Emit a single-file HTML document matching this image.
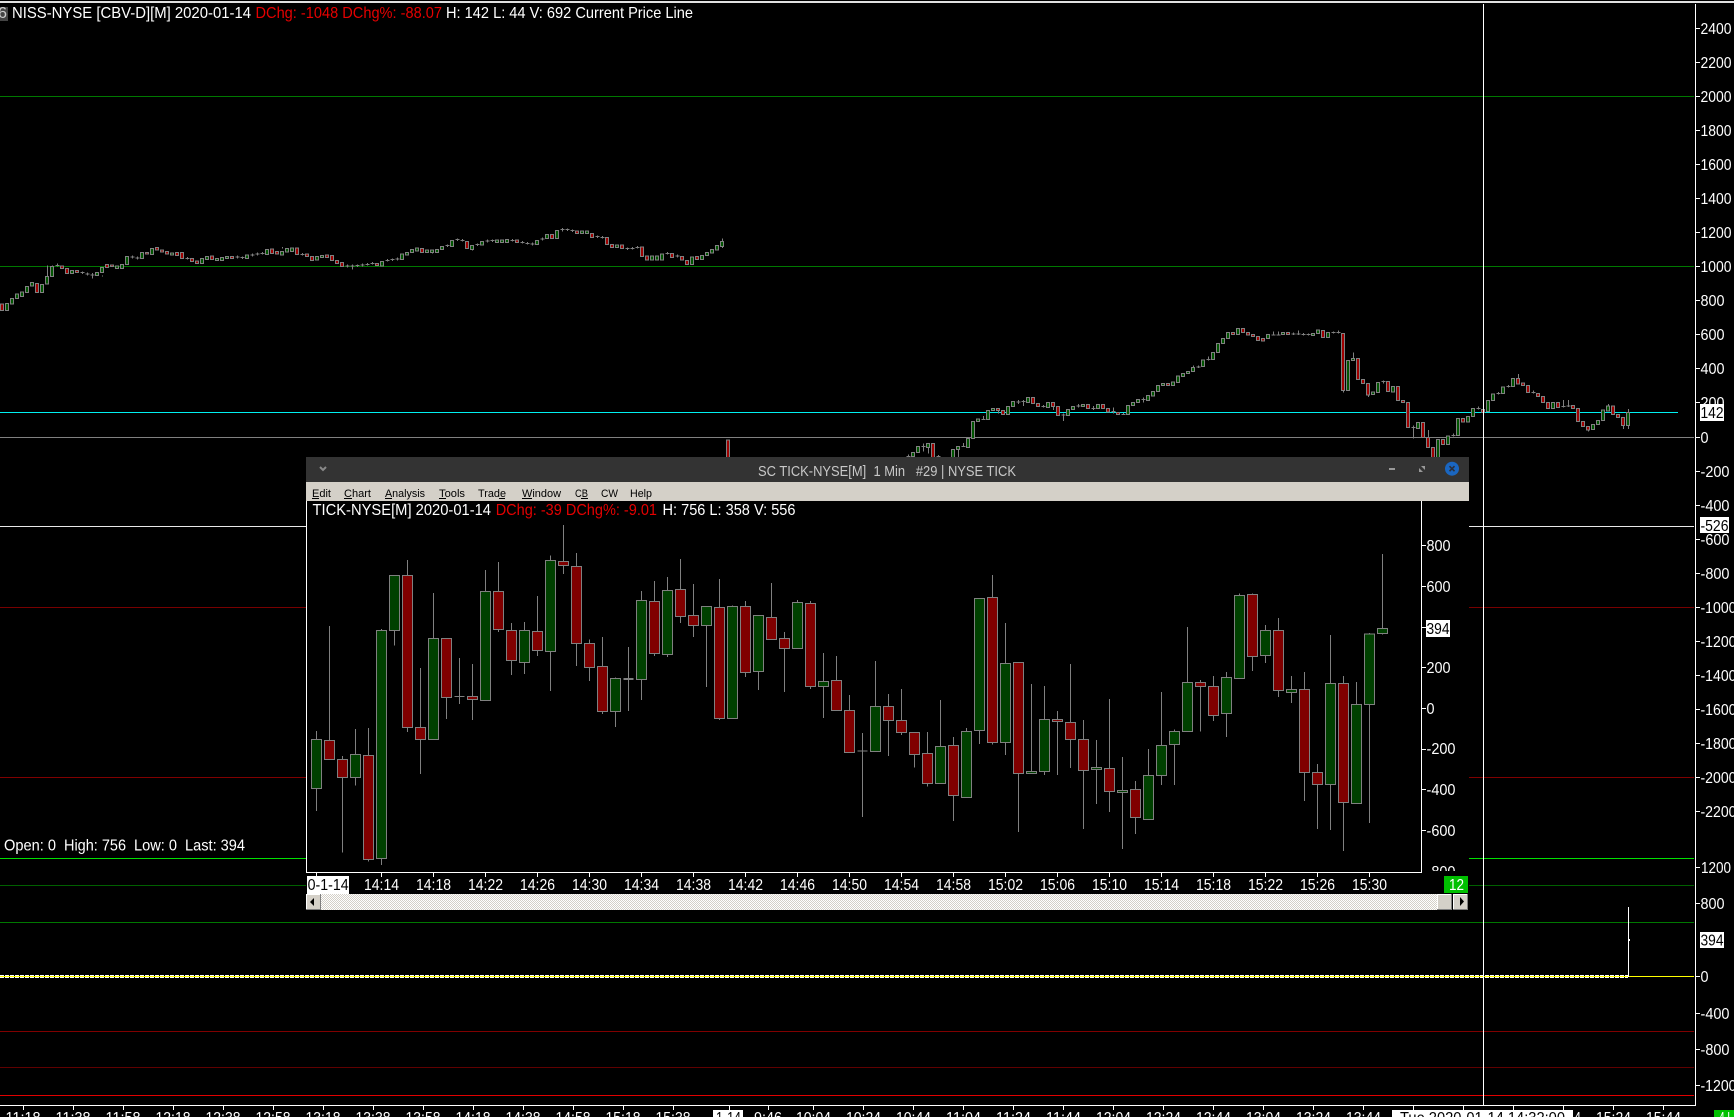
<!DOCTYPE html>
<html><head><meta charset="utf-8"><title>Chart</title>
<style>
html,body{margin:0;padding:0;background:#000;width:1734px;height:1117px;overflow:hidden}
svg{display:block}
text{font-family:"Liberation Sans",Arial,sans-serif;font-size:16px;fill:#fff}
.c path{vector-effect:non-scaling-stroke;stroke:#808080;stroke-width:1;shape-rendering:crispEdges}
.l{shape-rendering:crispEdges}
.m text{font-size:11px;fill:#000}
</style></head><body>
<svg width="1734" height="1117" viewBox="0 0 1734 1117" xmlns="http://www.w3.org/2000/svg">
<defs><pattern id="dth" width="2" height="2" patternUnits="userSpaceOnUse"><rect width="2" height="2" fill="#fff"/><rect width="1" height="1" fill="#d4d0c8"/><rect x="1" y="1" width="1" height="1" fill="#d4d0c8"/></pattern></defs>
<rect width="1734" height="1117" fill="#000"/>
<g class="l">
<rect x="0" y="1" width="1734" height="2" fill="#e0e0e0"/>
<rect x="0" y="96" width="1694" height="1" fill="#007800"/>
<rect x="0" y="266" width="1694" height="1" fill="#007800"/>
<rect x="0" y="437" width="1694" height="1" fill="#808080"/>
<rect x="0" y="412" width="1678" height="1" fill="#00f0f0"/>
<rect x="0" y="526" width="1694" height="1" fill="#e8e8e8"/>
<rect x="0" y="607" width="1694" height="1" fill="#780000"/>
<rect x="0" y="777" width="1694" height="1" fill="#800000"/>
<rect x="0" y="858" width="1694" height="1" fill="#00e000"/>
<rect x="0" y="885" width="1694" height="1" fill="#006000"/>
<rect x="0" y="922" width="1694" height="1" fill="#007800"/>
<rect x="0" y="1031" width="1694" height="1" fill="#800000"/>
<rect x="0" y="1067" width="1694" height="1" fill="#600000"/>
<rect x="0" y="1095" width="1694" height="1" fill="#e00000"/>
<rect x="0" y="1105" width="1696" height="1" fill="#fff"/>
<rect x="1695" y="4" width="1" height="1102" fill="#fff"/>
</g>
<!-- zero line in lower panel -->
<line x1="0" y1="976.5" x2="1628" y2="976.5" stroke="#fff" stroke-width="3" stroke-dasharray="4 1" class="l"/>
<rect x="0" y="976" width="1694" height="1" fill="#ff0" class="l"/>
<rect x="1628" y="907" width="1" height="70" fill="#fff" class="l"/>
<rect x="1629" y="939" width="1" height="2" fill="#fff" class="l"/>

<!-- main candles, segment 1 -->
<g class="c" transform="translate(2.5 0) scale(1 .33333)">
<path fill="#005500" d="M3 910h3V932h-3zM8 895h3V912h-3zM13 882h3V895h-3zM18 876h3V889h-3zM23 860h3V878h-3zM28 848h3V858h-3zM38 853h3V877h-3zM43 830h3V852h-3zM48 800h3V830h-3zM68 811h3V821h-3zM93 817h3V826h-3zM98 802h3V817h-3zM113 798h3V805h-3zM118 793h3V805h-3zM123 770h3V793h-3zM138 758h3V775h-3zM148 745h3V763h-3zM168 759h3V765h-3zM198 776h3V790h-3zM203 770h3V778h-3zM213 775h3V781h-3zM218 773h3V782h-3zM223 769h3V776h-3zM243 765h3V775h-3zM263 748h3V763h-3zM278 755h3V765h-3zM283 745h3V756h-3zM288 744h3V755h-3zM313 769h3V780h-3zM318 766h3V773h-3zM378 784h3V798h-3zM398 762h3V778h-3zM403 757h3V765h-3zM408 748h3V757h-3zM413 744h3V753h-3zM423 750h3V757h-3zM428 750h3V757h-3zM433 748h3V758h-3zM438 739h3V749h-3zM448 721h3V739h-3zM468 737h3V748h-3zM478 725h3V735h-3zM493 720h3V727h-3zM498 720h3V727h-3zM503 719h3V727h-3zM533 721h3V733h-3zM543 703h3V716h-3zM553 692h3V716h-3zM578 693h3V700h-3zM583 693h3V700h-3zM613 735h3V743h-3zM648 768h3V780h-3zM653 768h3V780h-3zM658 762h3V780h-3zM688 771h3V793h-3zM698 767h3V779h-3zM703 757h3V767h-3zM708 749h3V759h-3zM713 737h3V750h-3zM718 725h3V740h-3z"/>
<path fill="#a00000" d="M-2 912h3V932h-3zM33 850h3V878h-3zM58 798h3V805h-3zM63 805h3V821h-3zM73 811h3V818h-3zM103 794h3V802h-3zM108 795h3V800h-3zM143 757h3V762h-3zM153 743h3V750h-3zM158 750h3V756h-3zM163 755h3V762h-3zM173 757h3V766h-3zM178 758h3V775h-3zM188 775h3V785h-3zM193 783h3V790h-3zM208 768h3V778h-3zM228 769h3V775h-3zM268 747h3V760h-3zM273 755h3V762h-3zM293 744h3V763h-3zM303 762h3V769h-3zM308 769h3V781h-3zM323 765h3V772h-3zM328 767h3V782h-3zM333 782h3V790h-3zM338 788h3V800h-3zM373 790h3V797h-3zM418 745h3V758h-3zM463 724h3V745h-3zM513 720h3V727h-3zM548 703h3V716h-3zM573 693h3V700h-3zM588 700h3V712h-3zM603 713h3V733h-3zM608 733h3V743h-3zM618 735h3V745h-3zM638 741h3V770h-3zM643 768h3V780h-3zM668 760h3V772h-3zM678 770h3V780h-3zM683 781h3V793h-3zM693 770h3V779h-3z"/>
<path fill="none" d="M53 796h4M55 790v10M78 818h4M80 814v8M83 822h4M85 818v8M88 825h4M90 819v16M128 771h4M130 767v8M133 774h4M135 770v8M183 775h4M185 771v8M233 771h4M235 767v8M238 773h4M240 769v8M248 765h4M250 761v8M253 762h4M255 758v8M258 760h4M260 756v8M298 763h4M300 759v8M343 798h4M345 794v8M348 798h4M350 794v14M353 797h4M355 793v8M358 795h4M360 791v8M363 793h4M365 789v8M368 790h4M370 786v8M383 781h4M385 777v8M388 779h4M390 775v8M393 777h4M395 773v8M443 737h4M445 733v8M453 719h4M455 715v8M458 721h4M460 717v8M473 734h4M475 730v8M483 723h4M485 719v8M488 722h4M490 718v8M508 721h4M510 717v8M518 727h4M520 723v8M523 730h4M525 726v8M528 732h4M530 728v8M538 717h4M540 713v8M558 689h4M560 684v10M563 689h4M565 685v8M568 692h4M570 688v8M593 710h4M595 706v8M598 712h4M600 708v8M623 746h4M625 742v8M628 745h4M630 741v8M633 742h4M635 738v8M663 760h4M665 756v8M673 768h4M675 764v8M45 796v34M720 715v10M720 740v4M50 796v4M60 805v2M100 826v4M280 745v-4M430 757v3M470 748v4"/>
</g>

<!-- main candles, segment 2 -->
<g class="c" transform="translate(.5 320) scale(1 .33333)">
<path fill="#005500" d="M911 398h3V410h-3zM916 379h3V398h-3zM926 370h3V383h-3zM951 388h3V420h-3zM956 379h3V389h-3zM966 355h3V383h-3zM971 304h3V355h-3zM976 297h3V305h-3zM986 272h3V299h-3zM991 265h3V272h-3zM1006 260h3V283h-3zM1011 245h3V260h-3zM1026 232h3V248h-3zM1046 248h3V263h-3zM1066 268h3V287h-3zM1071 260h3V269h-3zM1081 253h3V260h-3zM1096 254h3V265h-3zM1126 257h3V283h-3zM1131 248h3V257h-3zM1136 238h3V248h-3zM1146 226h3V242h-3zM1151 214h3V228h-3zM1156 196h3V215h-3zM1161 190h3V197h-3zM1171 186h3V197h-3zM1176 168h3V188h-3zM1181 160h3V170h-3zM1186 154h3V161h-3zM1191 142h3V155h-3zM1201 120h3V140h-3zM1211 97h3V119h-3zM1216 70h3V97h-3zM1221 55h3V71h-3zM1226 37h3V56h-3zM1236 25h3V44h-3zM1266 43h3V55h-3zM1281 37h3V44h-3zM1311 40h3V47h-3zM1316 30h3V40h-3zM1326 37h3V52h-3zM1346 121h3V212h-3zM1351 115h3V121h-3zM1371 216h3V224h-3zM1376 187h3V218h-3zM1391 199h3V216h-3zM1416 307h3V325h-3zM1436 358h3V420h-3zM1446 348h3V374h-3zM1456 295h3V347h-3zM1466 289h3V306h-3zM1471 265h3V289h-3zM1486 241h3V275h-3zM1491 222h3V242h-3zM1501 201h3V221h-3zM1511 175h3V200h-3zM1551 247h3V265h-3zM1591 314h3V329h-3zM1596 301h3V314h-3zM1601 270h3V301h-3zM1606 258h3V273h-3zM1626 277h3V317h-3z"/>
<path fill="#a00000" d="M726 360h3V420h-3zM931 370h3V420h-3zM996 265h3V272h-3zM1001 272h3V283h-3zM1031 232h3V250h-3zM1036 250h3V260h-3zM1051 248h3V260h-3zM1056 260h3V287h-3zM1086 254h3V265h-3zM1101 254h3V265h-3zM1106 265h3V276h-3zM1116 278h3V284h-3zM1166 190h3V197h-3zM1231 37h3V44h-3zM1241 25h3V38h-3zM1246 37h3V45h-3zM1251 43h3V50h-3zM1256 50h3V62h-3zM1261 55h3V63h-3zM1286 37h3V44h-3zM1321 31h3V52h-3zM1341 40h3V212h-3zM1356 115h3V178h-3zM1361 178h3V191h-3zM1366 190h3V225h-3zM1386 184h3V215h-3zM1396 199h3V242h-3zM1401 241h3V248h-3zM1406 248h3V322h-3zM1421 308h3V352h-3zM1426 352h3V382h-3zM1431 382h3V420h-3zM1441 358h3V373h-3zM1461 295h3V306h-3zM1481 269h3V277h-3zM1516 175h3V192h-3zM1521 189h3V197h-3zM1526 196h3V218h-3zM1536 220h3V230h-3zM1541 230h3V248h-3zM1546 247h3V265h-3zM1556 247h3V263h-3zM1571 256h3V265h-3zM1576 265h3V305h-3zM1581 304h3V320h-3zM1586 319h3V330h-3zM1611 258h3V283h-3zM1616 283h3V292h-3zM1621 292h3V317h-3z"/>
<path fill="none" d="M906 410h4M908 404v8M921 380h4M923 370v25M936 410h4M938 405v15M961 379h4M963 369v10M981 298h4M983 288v10M1016 246h4M1018 240v12M1021 245h4M1023 240v18M1041 260h4M1043 255v7M1061 285h4M1063 280v23M1076 258h4M1078 252v10M1091 265h4M1093 258v12M1111 275h4M1113 262v18M1121 283h4M1123 279v6M1141 238h4M1143 232v16M1196 141h4M1198 137v7M1206 119h4M1208 110v11M1271 45h4M1273 35v12M1276 45h4M1278 35v12M1291 42h4M1293 38v7M1296 42h4M1298 32v13M1301 43h4M1303 39v7M1306 44h4M1308 40v7M1331 38h4M1333 34v7M1336 38h4M1338 32v8M1381 185h4M1383 182v8M1411 322h4M1413 317v39M1451 346h4M1453 340v9M1476 265h4M1478 260v8M1496 221h4M1498 216v8M1506 200h4M1508 195v8M1531 217h4M1533 212v8M1561 260h4M1563 240v22M1566 258h4M1568 240v21M928 383v17M958 389v22M998 272v8M1053 260v10M1428 330v22M1518 162v13M1628 267v10M1628 317v10M1623 317v10M1353 97v18M1343 212v6M1368 225v6M1608 252v6M1193 137v5M1588 330v5"/>
</g>

<!-- crosshair -->
<rect x="1483" y="4" width="1" height="1101" fill="#fff" class="l"/>

<!-- main axis ticks -->
<path class="l" stroke="#fff" stroke-width="1" fill="none" d="M1696 28.5h4M1696 62.5h4M1696 96.5h4M1696 130.5h4M1696 164.5h4M1696 198.5h4M1696 232.5h4M1696 266.5h4M1696 300.5h4M1696 334.5h4M1696 368.5h4M1696 402.5h4M1696 437.5h4M1696 471.5h4M1696 505.5h4M1696 539.5h4M1696 573.5h4M1696 607.5h4M1696 641.5h4M1696 675.5h4M1696 709.5h4M1696 743.5h4M1696 777.5h4M1696 811.5h4M1696 867.5h4M1696 903.5h4M1696 976.5h4M1696 1013.5h4M1696 1049.5h4M1696 1085.5h4M23.5 1105v5M73.5 1105v5M123.5 1105v5M173.5 1105v5M223.5 1105v5M273.5 1105v5M323.5 1105v5M373.5 1105v5M423.5 1105v5M473.5 1105v5M523.5 1105v5M573.5 1105v5M623.5 1105v5M673.5 1105v5M729.5 1105v5M768.5 1105v5M813.5 1105v5M863.5 1105v5M913.5 1105v5M963.5 1105v5M1013.5 1105v5M1063.5 1105v5M1113.5 1105v5M1163.5 1105v5M1213.5 1105v5M1263.5 1105v5M1313.5 1105v5M1363.5 1105v5M1413.5 1105v5M1463.5 1105v5M1513.5 1105v5M1563.5 1105v5M1613.5 1105v5M1663.5 1105v5"/>

<!-- main axis labels -->
<g>
<text x="1700.5" y="34" textLength="31" lengthAdjust="spacingAndGlyphs">2400</text>
<text x="1700.5" y="68" textLength="31" lengthAdjust="spacingAndGlyphs">2200</text>
<text x="1700.5" y="102" textLength="31" lengthAdjust="spacingAndGlyphs">2000</text>
<text x="1700.5" y="136" textLength="31" lengthAdjust="spacingAndGlyphs">1800</text>
<text x="1700.5" y="170" textLength="31" lengthAdjust="spacingAndGlyphs">1600</text>
<text x="1700.5" y="204" textLength="31" lengthAdjust="spacingAndGlyphs">1400</text>
<text x="1700.5" y="238" textLength="31" lengthAdjust="spacingAndGlyphs">1200</text>
<text x="1700.5" y="272" textLength="31" lengthAdjust="spacingAndGlyphs">1000</text>
<text x="1700.5" y="306" textLength="24" lengthAdjust="spacingAndGlyphs">800</text>
<text x="1700.5" y="340" textLength="24" lengthAdjust="spacingAndGlyphs">600</text>
<text x="1700.5" y="374" textLength="24" lengthAdjust="spacingAndGlyphs">400</text>
<text x="1700.5" y="408" textLength="24" lengthAdjust="spacingAndGlyphs">200</text>
<text x="1700.5" y="443" textLength="8" lengthAdjust="spacingAndGlyphs">0</text>
<text x="1700.5" y="477" textLength="29" lengthAdjust="spacingAndGlyphs">-200</text>
<text x="1700.5" y="511" textLength="29" lengthAdjust="spacingAndGlyphs">-400</text>
<text x="1700.5" y="545" textLength="29" lengthAdjust="spacingAndGlyphs">-600</text>
<text x="1700.5" y="579" textLength="29" lengthAdjust="spacingAndGlyphs">-800</text>
<text x="1700.5" y="613" textLength="36" lengthAdjust="spacingAndGlyphs">-1000</text>
<text x="1700.5" y="647" textLength="36" lengthAdjust="spacingAndGlyphs">-1200</text>
<text x="1700.5" y="681" textLength="36" lengthAdjust="spacingAndGlyphs">-1400</text>
<text x="1700.5" y="715" textLength="36" lengthAdjust="spacingAndGlyphs">-1600</text>
<text x="1700.5" y="749" textLength="36" lengthAdjust="spacingAndGlyphs">-1800</text>
<text x="1700.5" y="783" textLength="36" lengthAdjust="spacingAndGlyphs">-2000</text>
<text x="1700.5" y="817" textLength="36" lengthAdjust="spacingAndGlyphs">-2200</text>
<text x="1701" y="873" textLength="30" lengthAdjust="spacingAndGlyphs">1200</text>
<text x="1700.5" y="909" textLength="24" lengthAdjust="spacingAndGlyphs">800</text>
<text x="1700.5" y="982" textLength="8" lengthAdjust="spacingAndGlyphs">0</text>
<text x="1700.5" y="1019" textLength="29" lengthAdjust="spacingAndGlyphs">-400</text>
<text x="1700.5" y="1055" textLength="29" lengthAdjust="spacingAndGlyphs">-800</text>
<text x="1700.5" y="1091" textLength="36" lengthAdjust="spacingAndGlyphs">-1200</text>
<rect x="1700" y="404" width="24" height="17" fill="#fff"/>
<text x="1700.5" y="418" textLength="23" lengthAdjust="spacingAndGlyphs" style="fill:#000">142</text>
<rect x="1700" y="517" width="29" height="16" fill="#fff"/>
<text x="1700.5" y="531" textLength="28" lengthAdjust="spacingAndGlyphs" style="fill:#000">-526</text>
<rect x="1700" y="932" width="24" height="16" fill="#fff"/>
<text x="1700.5" y="945.5" textLength="23" lengthAdjust="spacingAndGlyphs" style="fill:#000">394</text>
</g>

<!-- titles -->
<rect x="0" y="7" width="8" height="14" fill="#444"/>
<text x="-2" y="18" textLength="9" lengthAdjust="spacingAndGlyphs" style="fill:#ccc">6</text>
<text x="12" y="18" textLength="239" lengthAdjust="spacingAndGlyphs">NISS-NYSE [CBV-D][M] 2020-01-14</text>
<text x="255.5" y="18" textLength="186.5" lengthAdjust="spacingAndGlyphs" style="fill:#e60000">DChg: -1048 DChg%: -88.07</text>
<text x="446" y="18" textLength="247" lengthAdjust="spacingAndGlyphs">H: 142 L: 44 V: 692 Current Price Line</text>
<text x="4" y="850.5" textLength="52" lengthAdjust="spacingAndGlyphs">Open: 0</text>
<text x="64" y="850.5" textLength="62" lengthAdjust="spacingAndGlyphs">High: 756</text>
<text x="134" y="850.5" textLength="43" lengthAdjust="spacingAndGlyphs">Low: 0</text>
<text x="185" y="850.5" textLength="60" lengthAdjust="spacingAndGlyphs">Last: 394</text>

<!-- main bottom axis labels -->
<g>
<text x="5.5" y="1123" textLength="35" lengthAdjust="spacingAndGlyphs">11:18</text>
<text x="55.5" y="1123" textLength="35" lengthAdjust="spacingAndGlyphs">11:38</text>
<text x="105.5" y="1123" textLength="35" lengthAdjust="spacingAndGlyphs">11:58</text>
<text x="155.5" y="1123" textLength="35" lengthAdjust="spacingAndGlyphs">12:18</text>
<text x="205.5" y="1123" textLength="35" lengthAdjust="spacingAndGlyphs">12:38</text>
<text x="255.5" y="1123" textLength="35" lengthAdjust="spacingAndGlyphs">12:58</text>
<text x="305.5" y="1123" textLength="35" lengthAdjust="spacingAndGlyphs">13:18</text>
<text x="355.5" y="1123" textLength="35" lengthAdjust="spacingAndGlyphs">13:38</text>
<text x="405.5" y="1123" textLength="35" lengthAdjust="spacingAndGlyphs">13:58</text>
<text x="455.5" y="1123" textLength="35" lengthAdjust="spacingAndGlyphs">14:18</text>
<text x="505.5" y="1123" textLength="35" lengthAdjust="spacingAndGlyphs">14:38</text>
<text x="555.5" y="1123" textLength="35" lengthAdjust="spacingAndGlyphs">14:58</text>
<text x="605.5" y="1123" textLength="35" lengthAdjust="spacingAndGlyphs">15:18</text>
<text x="655.5" y="1123" textLength="35" lengthAdjust="spacingAndGlyphs">15:38</text>
<rect x="713" y="1110" width="30" height="7" fill="#fff"/>
<text x="716" y="1123" textLength="25" lengthAdjust="spacingAndGlyphs" style="fill:#000">1-14</text>
<text x="754" y="1123" textLength="28" lengthAdjust="spacingAndGlyphs">9:46</text>
<text x="796" y="1123" textLength="35" lengthAdjust="spacingAndGlyphs">10:04</text>
<text x="846" y="1123" textLength="35" lengthAdjust="spacingAndGlyphs">10:24</text>
<text x="896" y="1123" textLength="35" lengthAdjust="spacingAndGlyphs">10:44</text>
<text x="946" y="1123" textLength="35" lengthAdjust="spacingAndGlyphs">11:04</text>
<text x="996" y="1123" textLength="35" lengthAdjust="spacingAndGlyphs">11:24</text>
<text x="1046" y="1123" textLength="35" lengthAdjust="spacingAndGlyphs">11:44</text>
<text x="1096" y="1123" textLength="35" lengthAdjust="spacingAndGlyphs">12:04</text>
<text x="1146" y="1123" textLength="35" lengthAdjust="spacingAndGlyphs">12:24</text>
<text x="1196" y="1123" textLength="35" lengthAdjust="spacingAndGlyphs">12:44</text>
<text x="1246" y="1123" textLength="35" lengthAdjust="spacingAndGlyphs">13:04</text>
<text x="1296" y="1123" textLength="35" lengthAdjust="spacingAndGlyphs">13:24</text>
<text x="1346" y="1123" textLength="35" lengthAdjust="spacingAndGlyphs">13:44</text>
<rect x="1392" y="1110" width="181" height="7" fill="#fff"/>
<text x="1400" y="1123" textLength="165" lengthAdjust="spacingAndGlyphs" style="fill:#000">Tue 2020-01-14  14:32:00</text>
<text x="1574" y="1123" textLength="7" lengthAdjust="spacingAndGlyphs">4</text>
<text x="1596" y="1123" textLength="35" lengthAdjust="spacingAndGlyphs">15:24</text>
<text x="1646" y="1123" textLength="35" lengthAdjust="spacingAndGlyphs">15:44</text>
<rect x="1714" y="1110" width="20" height="7" fill="#00c000"/>
<text x="1719" y="1123" textLength="14" lengthAdjust="spacingAndGlyphs">4 L</text>
</g>

<!-- window -->
<rect x="306" y="457" width="1163" height="25" fill="#333"/>
<rect x="306" y="482" width="1163" height="19" fill="#d4d0c8"/>
<rect x="306" y="501" width="1163" height="393" fill="#000"/>
<polyline points="320,467 323,470 326,467" fill="none" stroke="#8a8a8a" stroke-width="2"/>
<text x="758" y="476" textLength="258" lengthAdjust="spacingAndGlyphs" xml:space="preserve" style="font-size:14.5px;fill:#c8c8c8">SC TICK-NYSE[M]  1 Min   #29 | NYSE TICK</text>
<rect x="1389" y="468" width="6" height="2" fill="#999"/>
<polygon points="1421,466 1425,466 1425,470" fill="#999"/>
<polygon points="1419,468 1423,472 1419,472" fill="#999"/>
<circle cx="1452" cy="468.7" r="7" fill="#1a66c0"/>
<path d="M1449.5 466.2l5 5M1454.5 466.2l-5 5" stroke="#2b2f3a" stroke-width="1.6" fill="none"/>

<g class="m">
<text x="312" y="497" textLength="19" lengthAdjust="spacingAndGlyphs">Edit</text>
<text x="344" y="497" textLength="27" lengthAdjust="spacingAndGlyphs">Chart</text>
<text x="385" y="497" textLength="40" lengthAdjust="spacingAndGlyphs">Analysis</text>
<text x="439" y="497" textLength="26" lengthAdjust="spacingAndGlyphs">Tools</text>
<text x="478" y="497" textLength="28" lengthAdjust="spacingAndGlyphs">Trade</text>
<text x="522" y="497" textLength="39" lengthAdjust="spacingAndGlyphs">Window</text>
<text x="575" y="497" textLength="13" lengthAdjust="spacingAndGlyphs">CB</text>
<text x="601" y="497" textLength="17" lengthAdjust="spacingAndGlyphs">CW</text>
<text x="630" y="497" textLength="22" lengthAdjust="spacingAndGlyphs">Help</text>
</g>
<path class="l" stroke="#000" stroke-width="1" fill="none" d="M312 498.5h7M344 498.5h8M385 498.5h7M439 498.5h7M499 498.5h6M522 498.5h10M581 498.5h7"/>

<text x="312.5" y="515" textLength="178.5" lengthAdjust="spacingAndGlyphs">TICK-NYSE[M] 2020-01-14</text>
<text x="495.7" y="515" textLength="161.3" lengthAdjust="spacingAndGlyphs" style="fill:#e60000">DChg: -39 DChg%: -9.01</text>
<text x="662.5" y="515" textLength="133" lengthAdjust="spacingAndGlyphs">H: 756 L: 358 V: 556</text>

<!-- window candles -->
<g class="c" transform="translate(316.5 450) scale(1 .33333)">
<path fill="none" d="M0 843V1083M13 528V928M26 918V1208M39 837V1007M52 834V1235M65 537V1245M78 376V587M91 330V846M104 654V972M117 429V868M130 565V807M143 624V762M156 642V810M169 360V751M182 336V546M195 519V675M208 516V672M221 438V618M234 316V723M247 225V372M260 309V648M273 568V693M286 561V792M299 682V831M312 591V783M325 423V750M338 393V618M351 381V621M364 327V519M377 402V561M390 469V711M403 387V810M416 466V805M429 453V681M442 496V720M455 399V568M468 546V726M481 450V595M494 453V717M507 609V804M520 618V781M533 735V907M546 849V1101M559 633V904M572 732V918M585 717V855M598 847V953M611 846V1010M624 750V1000M637 861V1113M650 834V1042M663 445V882M676 375V884M689 519V915M702 637V1146M715 702V970M728 708V975M741 783V975M754 642V954M767 810V1137M780 870V1062M793 747V1086M806 921V1197M819 993V1152M832 897V1108M845 726V1005M858 838V1005M871 531V844M884 690V844M897 678V813M910 666V861M923 430V685M936 430V663M949 525V639M962 504V741M975 678V759M988 666V1053M1001 942V1137M1014 555V1140M1027 678V1203M1040 696V1060M1053 549V1119M1066 312V554M138 739h10M307 686h10M307 689h10M541 903h10"/>
<path fill="#004000" d="M-5 868h10V1015h-10zM34 913h10V982h-10zM60 541h10V1225h-10zM73 376h10V541h-10zM112 565h10V868h-10zM164 424h10V751h-10zM203 541h10V637h-10zM229 331h10V604h-10zM294 685h10V784h-10zM320 451h10V688h-10zM346 421h10V613h-10zM385 469h10V526h-10zM411 469h10V805h-10zM437 496h10V664h-10zM476 457h10V595h-10zM502 694h10V709h-10zM554 769h10V904h-10zM619 889h10V1000h-10zM645 844h10V1042h-10zM658 445h10V841h-10zM684 640h10V877h-10zM710 964h10V970h-10zM723 808h10V964h-10zM775 952h10V958h-10zM801 1021h10V1027h-10zM827 976h10V1108h-10zM840 886h10V976h-10zM853 844h10V883h-10zM866 697h10V844h-10zM905 682h10V790h-10zM918 436h10V685h-10zM944 541h10V616h-10zM970 718h10V727h-10zM1009 700h10V1003h-10zM1035 763h10V1060h-10zM1048 552h10V763h-10zM1061 535h10V550h-10z"/>
<path fill="#800000" d="M8 871h10V928h-10zM21 928h10V982h-10zM47 916h10V1228h-10zM86 376h10V832h-10zM99 832h10V868h-10zM125 565h10V742h-10zM151 739h10V748h-10zM177 424h10V538h-10zM190 541h10V631h-10zM216 544h10V601h-10zM242 334h10V346h-10zM255 349h10V580h-10zM268 580h10V652h-10zM281 649h10V784h-10zM333 454h10V610h-10zM359 418h10V499h-10zM372 496h10V526h-10zM398 472h10V805h-10zM424 469h10V667h-10zM450 502h10V568h-10zM463 565h10V595h-10zM489 460h10V709h-10zM515 691h10V781h-10zM528 781h10V907h-10zM567 769h10V811h-10zM580 811h10V847h-10zM593 847h10V913h-10zM606 910h10V1000h-10zM632 886h10V1036h-10zM671 442h10V877h-10zM697 637h10V970h-10zM736 808h10V815h-10zM749 817h10V868h-10zM762 868h10V961h-10zM788 955h10V1024h-10zM814 1018h10V1102h-10zM879 697h10V709h-10zM892 709h10V796h-10zM931 433h10V619h-10zM957 541h10V721h-10zM983 718h10V967h-10zM996 967h10V1003h-10zM1022 700h10V1057h-10z"/>
</g>

<!-- window axes -->
<rect x="306" y="501" width="1" height="372" fill="#fff" class="l"/>
<rect x="306" y="872" width="1116" height="1" fill="#fff" class="l"/>
<rect x="1421" y="501" width="1" height="372" fill="#fff" class="l"/>
<path class="l" stroke="#fff" stroke-width="1" fill="none" d="M1422 545.5h4M1422 586.5h4M1422 627.5h4M1422 667.5h4M1422 708.5h4M1422 749.5h4M1422 789.5h4M1422 830.5h4M316.5 873v4M381.5 873v4M433.5 873v4M485.5 873v4M537.5 873v4M589.5 873v4M641.5 873v4M693.5 873v4M745.5 873v4M797.5 873v4M849.5 873v4M901.5 873v4M953.5 873v4M1005.5 873v4M1057.5 873v4M1109.5 873v4M1161.5 873v4M1213.5 873v4M1265.5 873v4M1317.5 873v4M1369.5 873v4"/>
<text x="1426.5" y="551" textLength="24" lengthAdjust="spacingAndGlyphs">800</text>
<text x="1426.5" y="592" textLength="24" lengthAdjust="spacingAndGlyphs">600</text>
<text x="1426.5" y="673" textLength="24" lengthAdjust="spacingAndGlyphs">200</text>
<text x="1426.5" y="714" textLength="8" lengthAdjust="spacingAndGlyphs">0</text>
<text x="1426.5" y="754" textLength="29" lengthAdjust="spacingAndGlyphs">-200</text>
<text x="1426.5" y="795" textLength="29" lengthAdjust="spacingAndGlyphs">-400</text>
<text x="1426.5" y="836" textLength="29" lengthAdjust="spacingAndGlyphs">-600</text>
<text x="1426.5" y="877" textLength="29" lengthAdjust="spacingAndGlyphs">-800</text>
<rect x="1422" y="871" width="47" height="23" fill="#000"/>
<rect x="1426" y="620" width="24" height="17" fill="#fff"/>
<text x="1426.5" y="634" textLength="23" lengthAdjust="spacingAndGlyphs" style="fill:#000">394</text>

<!-- window time labels -->
<rect x="307" y="876" width="42" height="18" fill="#fff"/>
<text x="307.6" y="890" textLength="41" lengthAdjust="spacingAndGlyphs" style="fill:#000">0-1-14</text>
<text x="364" y="890" textLength="35" lengthAdjust="spacingAndGlyphs">14:14</text>
<text x="416" y="890" textLength="35" lengthAdjust="spacingAndGlyphs">14:18</text>
<text x="468" y="890" textLength="35" lengthAdjust="spacingAndGlyphs">14:22</text>
<text x="520" y="890" textLength="35" lengthAdjust="spacingAndGlyphs">14:26</text>
<text x="572" y="890" textLength="35" lengthAdjust="spacingAndGlyphs">14:30</text>
<text x="624" y="890" textLength="35" lengthAdjust="spacingAndGlyphs">14:34</text>
<text x="676" y="890" textLength="35" lengthAdjust="spacingAndGlyphs">14:38</text>
<text x="728" y="890" textLength="35" lengthAdjust="spacingAndGlyphs">14:42</text>
<text x="780" y="890" textLength="35" lengthAdjust="spacingAndGlyphs">14:46</text>
<text x="832" y="890" textLength="35" lengthAdjust="spacingAndGlyphs">14:50</text>
<text x="884" y="890" textLength="35" lengthAdjust="spacingAndGlyphs">14:54</text>
<text x="936" y="890" textLength="35" lengthAdjust="spacingAndGlyphs">14:58</text>
<text x="988" y="890" textLength="35" lengthAdjust="spacingAndGlyphs">15:02</text>
<text x="1040" y="890" textLength="35" lengthAdjust="spacingAndGlyphs">15:06</text>
<text x="1092" y="890" textLength="35" lengthAdjust="spacingAndGlyphs">15:10</text>
<text x="1144" y="890" textLength="35" lengthAdjust="spacingAndGlyphs">15:14</text>
<text x="1196" y="890" textLength="35" lengthAdjust="spacingAndGlyphs">15:18</text>
<text x="1248" y="890" textLength="35" lengthAdjust="spacingAndGlyphs">15:22</text>
<text x="1300" y="890" textLength="35" lengthAdjust="spacingAndGlyphs">15:26</text>
<text x="1352" y="890" textLength="35" lengthAdjust="spacingAndGlyphs">15:30</text>
<rect x="1444" y="876" width="24" height="17" fill="#00c000"/>
<text x="1449" y="890" textLength="15" lengthAdjust="spacingAndGlyphs">12</text>

<!-- scrollbar -->
<rect x="306" y="894" width="1163" height="16" fill="#000"/>
<rect x="321" y="894" width="1116" height="16" fill="url(#dth)" class="l"/>
<g class="l">
<rect x="306" y="894" width="15" height="16" fill="#808080"/>
<rect x="306" y="894" width="14" height="15" fill="#fff"/>
<rect x="307" y="895" width="13" height="14" fill="#d4d0c8"/>
<rect x="1437" y="894" width="15" height="16" fill="#808080"/>
<rect x="1437" y="894" width="14" height="15" fill="#fff"/>
<rect x="1438" y="895" width="13" height="14" fill="#d4d0c8"/>
<rect x="1453" y="894" width="15" height="16" fill="#808080"/>
<rect x="1453" y="894" width="14" height="15" fill="#fff"/>
<rect x="1454" y="895" width="13" height="14" fill="#d4d0c8"/>
</g>
<polygon points="310,902 314,898 314,906" fill="#000"/>
<polygon points="1460,897 1464,901.5 1460,906" fill="#000"/>
</svg>
</body></html>
